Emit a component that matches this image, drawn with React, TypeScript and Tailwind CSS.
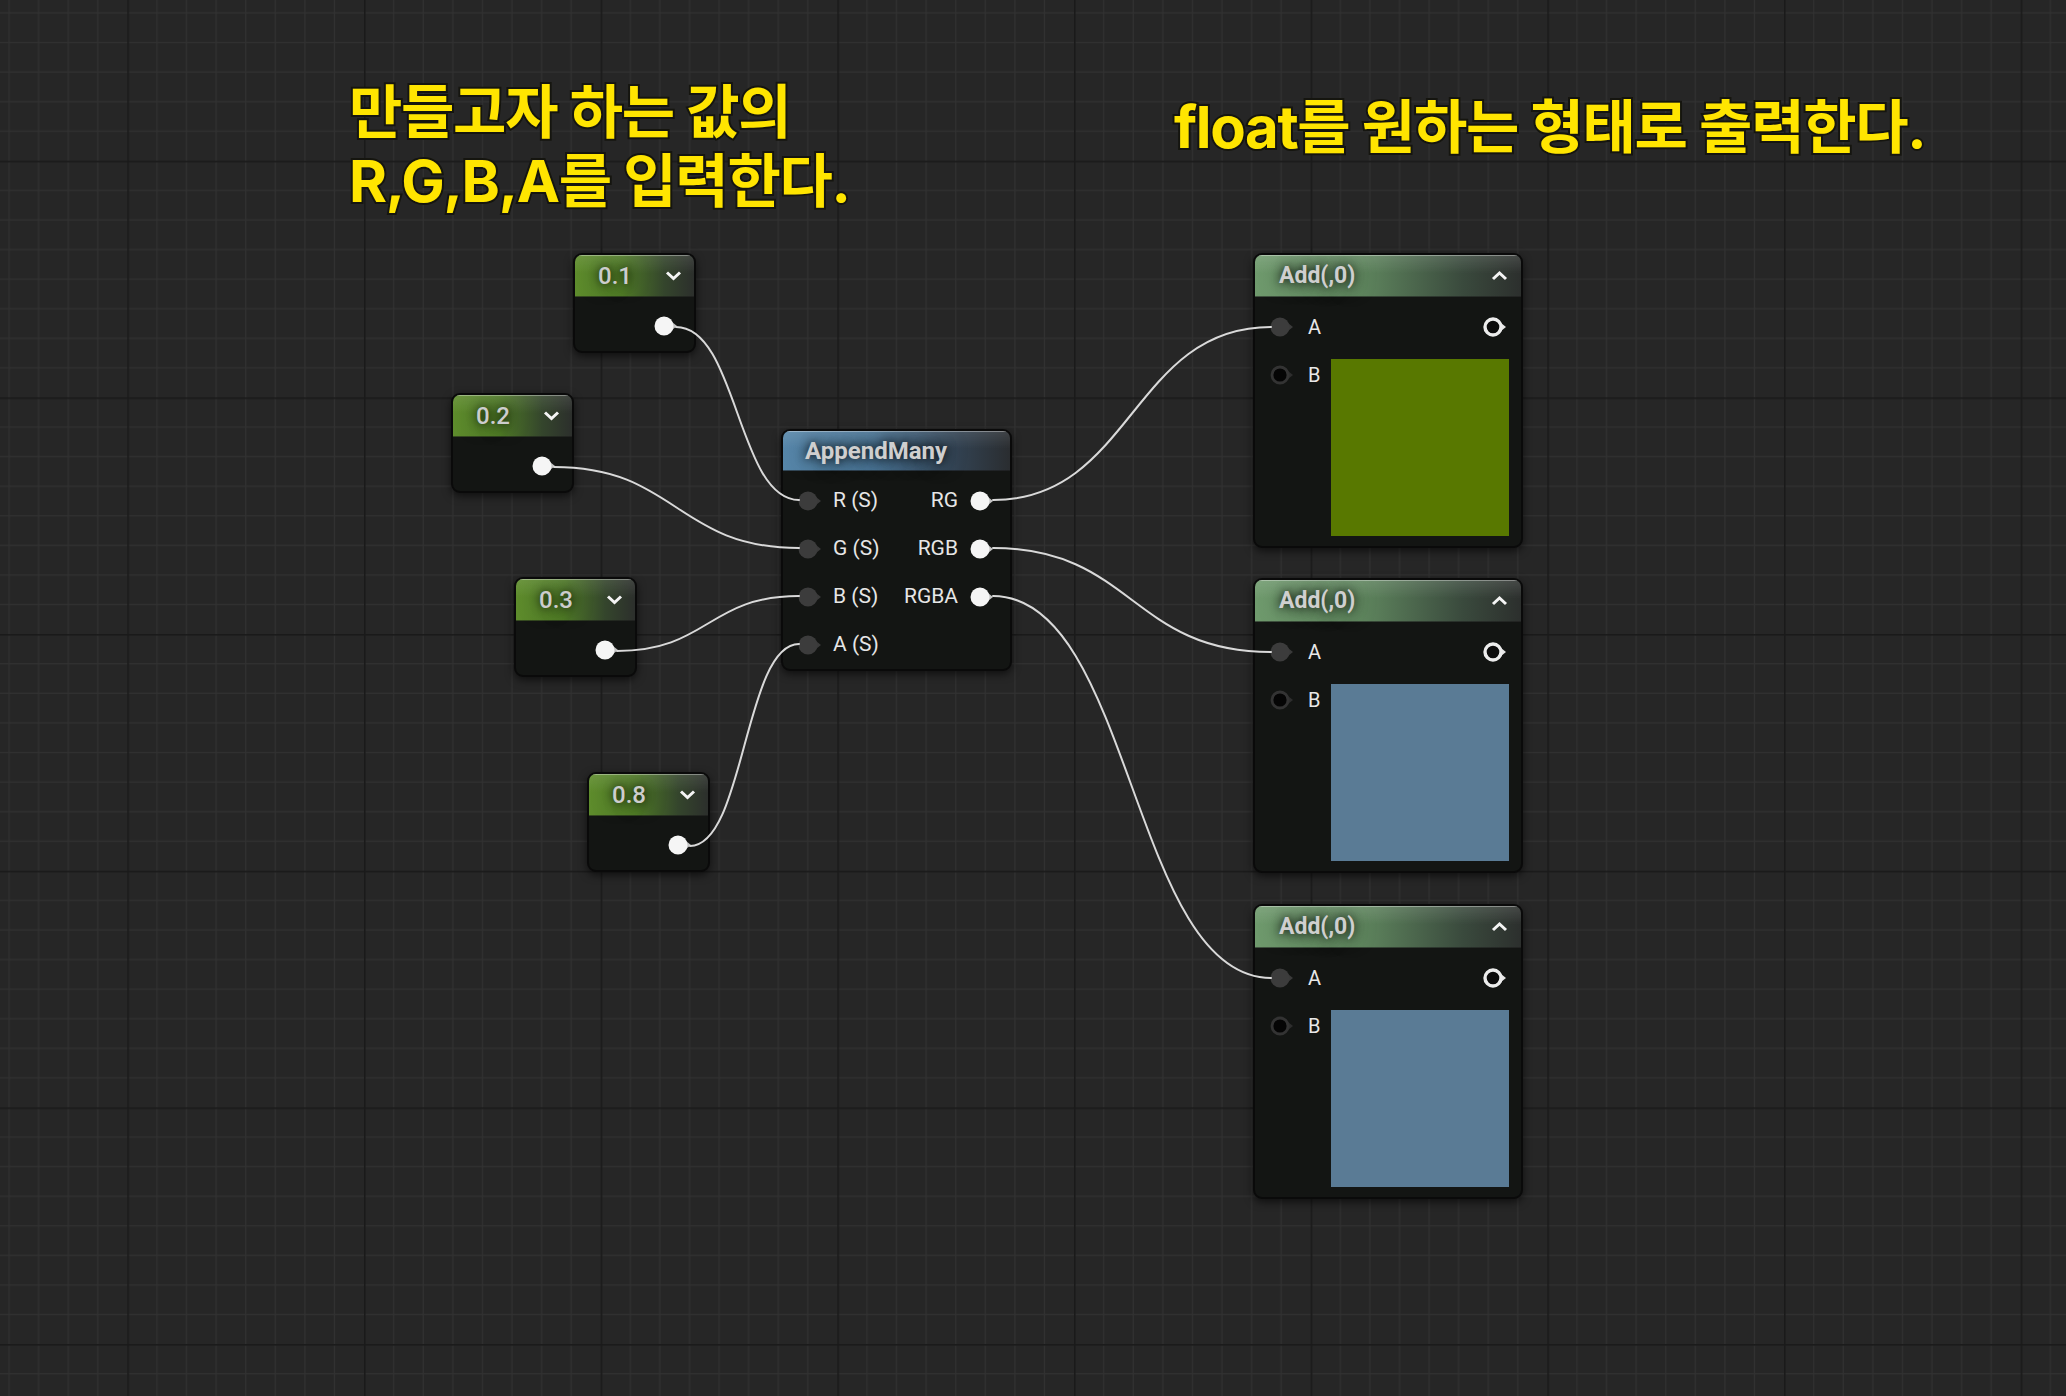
import React from 'react';

type PinKind = 'out' | 'in' | 'empty' | 'ring';

interface FloatNodeData {
  value: string;
  x: number;
  y: number;
}

interface AddNodeData {
  y: number;
  swatch: string;
}

const floats: FloatNodeData[] = [
  { value: '0.1', x: 573, y: 253 },
  { value: '0.2', x: 451, y: 393 },
  { value: '0.3', x: 514, y: 577 },
  { value: '0.8', x: 587, y: 772 },
];

const append = { x: 781, y: 429 };

const ADD_X = 1253;
const adds: AddNodeData[] = [
  { y: 253, swatch: 'bg-[#587800]' },
  { y: 578, swatch: 'bg-[#5a7b95]' },
  { y: 904, swatch: 'bg-[#5a7b95]' },
];

const Pin = ({ kind }: { kind: PinKind }) => {
  if (kind === 'out') {
    return (
      <svg width="24" height="20" viewBox="0 0 24 20" className="shrink-0">
        <path d="M18 6 L23 10 L18 14 Z" fill="#c4c4c4" />
        <circle cx="10" cy="10" r="9.5" fill="#f5f5f5" />
      </svg>
    );
  }
  if (kind === 'in') {
    return (
      <svg width="24" height="20" viewBox="0 0 24 20" className="shrink-0">
        <path d="M18 6 L23 10 L18 14 Z" fill="#3a3a3a" />
        <circle cx="10" cy="10" r="9.5" fill="#3c3c3c" />
      </svg>
    );
  }
  if (kind === 'empty') {
    return (
      <svg width="24" height="20" viewBox="0 0 24 20" className="shrink-0">
        <path d="M18 6 L23 10 L18 14 Z" fill="#2e2e2e" />
        <circle cx="10" cy="10" r="8" fill="#050505" stroke="#333333" strokeWidth="2.8" />
      </svg>
    );
  }
  return (
    <svg width="24" height="20" viewBox="0 0 24 20" className="shrink-0">
      <path d="M18 6 L23 10 L18 14 Z" fill="#e8e8e8" />
      <circle cx="10" cy="10" r="8" fill="#0c0c0c" stroke="#ececec" strokeWidth="3.4" />
    </svg>
  );
};

const Chevron = ({ up = false }: { up?: boolean }) => (
  <svg width="17" height="11" viewBox="0 0 17 11" className="shrink-0">
    <path
      d={up ? 'M2 9 L8.5 3 L15 9' : 'M2 2.5 L8.5 8.5 L15 2.5'}
      fill="none"
      stroke="#f4f4f4"
      strokeWidth="3"
      strokeLinejoin="miter"
    />
  </svg>
);

const titleShadow = '[text-shadow:0_0_10px_rgba(0,0,0,0.85),0_0_20px_rgba(0,0,0,0.55)]';

const FloatNode = ({ value, x, y }: FloatNodeData) => (
  <div
    className="absolute w-[123px] h-[100px] rounded-[9px] border-2 border-[#0a0a0a] bg-[#131513] shadow-[0_3px_8px_rgba(0,0,0,0.6)] overflow-hidden flex flex-col font-['Roboto',sans-serif]"
    style={{ left: x, top: y }}
  >
    <div className="h-[42px] shrink-0 flex items-center justify-between pl-[23px] pr-[12px] border-b border-black/50 shadow-[inset_0_1px_0_rgba(255,255,255,0.35)] bg-[linear-gradient(180deg,rgba(255,255,255,0.10)_0%,rgba(255,255,255,0)_45%),linear-gradient(90deg,#5e8c2c_0%,#4f7a27_40%,#34452c_75%,#2c2f2c_100%)]">
      <span className={`text-[24px] leading-none font-medium text-[#cdcdcd] ${titleShadow}`}>{value}</span>
      <Chevron />
    </div>
    <div className="flex-1 flex items-center justify-end pr-[16px] pt-[3px]">
      <Pin kind="out" />
    </div>
  </div>
);

const appendRows = [
  { input: 'R (S)', output: 'RG' },
  { input: 'G (S)', output: 'RGB' },
  { input: 'B (S)', output: 'RGBA' },
  { input: 'A (S)', output: '' },
];

const AppendManyNode = () => (
  <div
    className="absolute w-[231px] h-[242px] rounded-[9px] border-2 border-[#0a0a0a] bg-[#131513] shadow-[0_3px_8px_rgba(0,0,0,0.6)] overflow-hidden flex flex-col font-['Roboto',sans-serif]"
    style={{ left: append.x, top: append.y }}
  >
    <div className="h-[40px] shrink-0 flex items-center pl-[22px] border-b border-black/50 shadow-[inset_0_1px_0_rgba(255,255,255,0.35)] bg-[linear-gradient(180deg,rgba(255,255,255,0.10)_0%,rgba(255,255,255,0)_45%),linear-gradient(90deg,#5686a9_0%,#4a7495_40%,#324150_78%,#2a2d30_100%)]">
      <span className={`text-[24px] leading-none font-bold text-[#cfcfcf] ${titleShadow}`}>AppendMany</span>
    </div>
    <div className="flex flex-col pt-[6px]">
      {appendRows.map((r) => (
        <div key={r.input} className="h-[48px] flex items-center justify-between pl-[15px] pr-[16px]">
          <div className="flex items-center gap-[11px]">
            <Pin kind="in" />
            <span className="text-[21px] text-[#e6e6e6]">{r.input}</span>
          </div>
          {r.output && (
            <div className="flex items-center gap-[12px]">
              <span className="text-[21px] text-[#e6e6e6]">{r.output}</span>
              <Pin kind="out" />
            </div>
          )}
        </div>
      ))}
    </div>
  </div>
);

const AddNode = ({ y, swatch }: AddNodeData) => (
  <div
    className="absolute w-[270px] h-[295px] rounded-[9px] border-2 border-[#0a0a0a] bg-[#131513] shadow-[0_3px_8px_rgba(0,0,0,0.6)] overflow-hidden flex flex-col font-['Roboto',sans-serif]"
    style={{ left: ADD_X, top: y }}
  >
    <div className="h-[42px] shrink-0 flex items-center justify-between pl-[24px] pr-[13px] border-b border-black/50 shadow-[inset_0_1px_0_rgba(255,255,255,0.35)] bg-[linear-gradient(180deg,rgba(255,255,255,0.12)_0%,rgba(255,255,255,0)_45%),linear-gradient(90deg,#6f9a6d_0%,#5f865e_40%,#3a4a3d_78%,#2c2f2d_100%)]">
      <span className={`text-[23px] leading-none font-bold text-[#cfcfcf] ${titleShadow}`}>Add(,0)</span>
      <Chevron up />
    </div>
    <div className="flex flex-col pt-[6px] pl-[15px] pr-[12px]">
      <div className="h-[48px] flex items-center justify-between">
        <div className="flex items-center gap-[14px]">
          <Pin kind="in" />
          <span className="text-[20px] text-[#e8e8e8]">A</span>
        </div>
        <div className="pr-[2px]">
          <Pin kind="ring" />
        </div>
      </div>
      <div className="flex mt-[8px]">
        <div className="h-[32px] flex items-center gap-[14px]">
          <Pin kind="empty" />
          <span className="text-[20px] text-[#e8e8e8]">B</span>
        </div>
        <div className={`ml-auto w-[178px] h-[177px] ${swatch}`} />
      </div>
    </div>
  </div>
);

type Pt = [number, number];

const wirePath = ([x1, y1]: Pt, [x2, y2]: Pt) => {
  const c = Math.max(Math.abs(x2 - x1) * 0.5, 40);
  return `M ${x1} ${y1} C ${x1 + c} ${y1}, ${x2 - c} ${y2}, ${x2} ${y2}`;
};

const outPt = (cx: number, cy: number): Pt => [cx + 13, cy];
const inPt = (cx: number, cy: number): Pt => [cx - 9, cy];

const wires: [Pt, Pt][] = [
  ...floats.map((f, i): [Pt, Pt] => [outPt(f.x + 90, f.y + 74), inPt(append.x + 27, append.y + 71 + 48 * i)]),
  ...adds.map((a, i): [Pt, Pt] => [outPt(append.x + 199, append.y + 71 + 48 * i), inPt(ADD_X + 27, a.y + 74)]),
];

const Grid = () => {
  const major = 236.67;
  const minor = major / 8;
  return (
    <svg className="absolute inset-0 w-full h-full" xmlns="http://www.w3.org/2000/svg">
      <defs>
        <pattern id="ue-grid" x="127.3" y="160.7" width={major} height={major} patternUnits="userSpaceOnUse">
          {[1, 2, 3, 4, 5, 6, 7].map((i) => (
            <g key={i}>
              <rect x={i * minor - 0.5} y="0" width="1.2" height={major} fill="#313131" />
              <rect x="0" y={i * minor - 0.5} width={major} height="1.2" fill="#313131" />
            </g>
          ))}
          <rect x="0" y="0" width="1.6" height={major} fill="#1a1a1a" />
          <rect x="0" y="0" width={major} height="1.6" fill="#1a1a1a" />
        </pattern>
      </defs>
      <rect width="100%" height="100%" fill="url(#ue-grid)" />
    </svg>
  );
};

const titleText =
  "absolute font-['Inter','Noto_Sans_CJK_KR',sans-serif] font-bold text-[58px] leading-[69px] tracking-[-1.3px] text-[#ffe500] whitespace-nowrap [paint-order:stroke_fill] [-webkit-text-stroke:4px_#15150f]";

export default function App() {
  return (
    <div className="relative w-full h-screen overflow-hidden bg-[#262626]">
      <Grid />

      <div className={`${titleText} left-[349px] top-[78px]`}>
        <div>만들고자 하는 값의</div>
        <div>R,G,B,A를 입력한다.</div>
      </div>
      <div className={`${titleText} left-[1174px] top-[93px]`}>float를 원하는 형태로 출력한다.</div>

      {floats.map((f) => (
        <FloatNode key={f.value} {...f} />
      ))}
      <AppendManyNode />
      {adds.map((a) => (
        <AddNode key={a.y} {...a} />
      ))}

      <svg className="absolute inset-0 w-full h-full pointer-events-none">
        {wires.map(([a, b], i) => (
          <path key={i} d={wirePath(a, b)} fill="none" stroke="#d9d9d9" strokeWidth="2" strokeLinecap="round" />
        ))}
      </svg>
    </div>
  );
}
